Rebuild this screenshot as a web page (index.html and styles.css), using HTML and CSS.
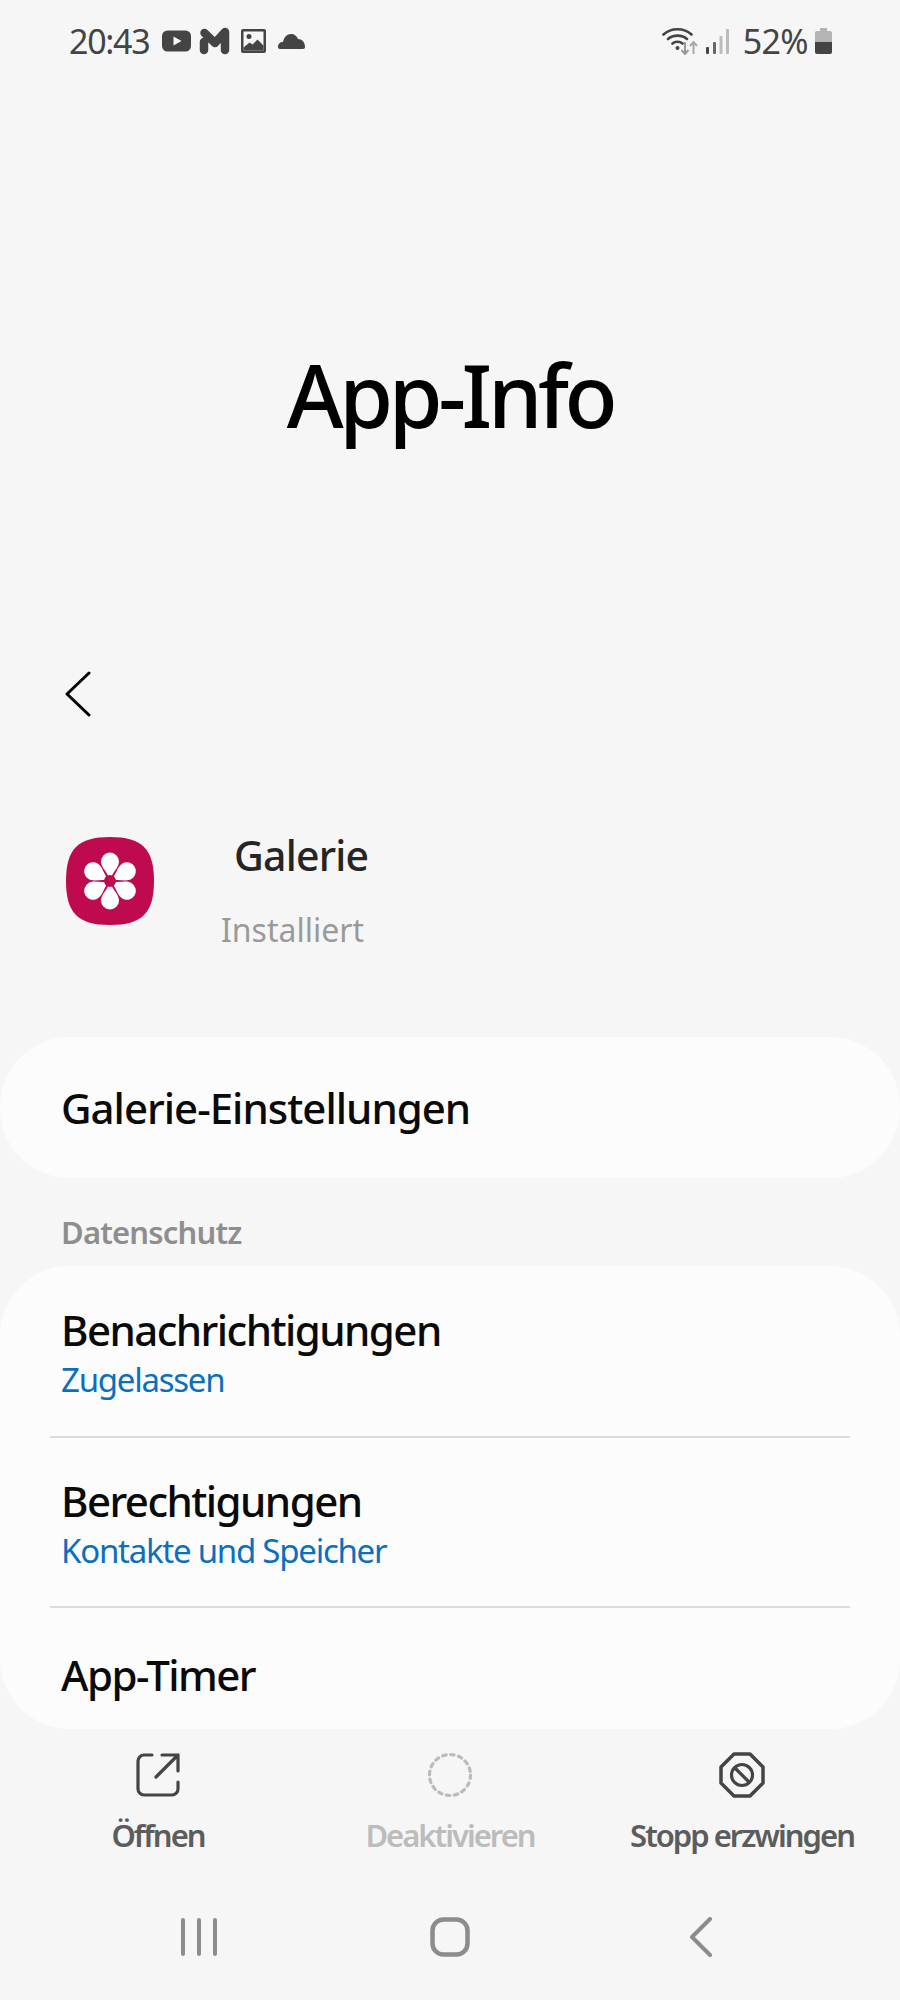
FILE: index.html
```html
<!DOCTYPE html>
<html>

<head>
  <title>App-Info</title>
  <link rel="stylesheet" href="styles.css">
</head>

<body>

  <div class="status-bar">
    <div class="status-side">
      <span class="status-time">20:43</span>
      <svg class="ic-tube" width="29" height="22" viewBox="0 0 29 22"><rect x="0" y="0.500" width="29" height="21" rx="5.500" fill="#444"/><path d="M11.500 6.500v9l8-4.500z" fill="#f6f6f6"/></svg>
      <svg class="ic-mail" width="31" height="28" viewBox="0 0 31 28"><path d="M5 15v8M5.500 6 16 16 26 5v18" fill="none" stroke="#444" stroke-width="8.500" stroke-linecap="round" stroke-linejoin="round"/></svg>
      <svg class="ic-pic" width="25" height="24" viewBox="0 0 25 24"><rect width="25" height="24" rx="2" fill="#444"/><rect x="2.500" y="2.500" width="20" height="19" fill="#f6f6f6"/><circle cx="8" cy="7.500" r="2.500" fill="#444"/><path d="M2.500 21.500v-3l6-5 3 2 5-5 6 6v5z" fill="#444"/></svg>
      <svg class="ic-cloud" width="27" height="17" viewBox="0 0 27 17"><path d="M0 14c0-3 2-5 5-5 1-5 4-8 8-8 3.500 0 6 2 7 5 4 0 7 3 7 8 0 1-.5 2-2 2H2c-1.300 0-2-.8-2-2z" fill="#444"/></svg>
    </div>
    <div class="status-side">
      <svg class="ic-wifi" width="36" height="28" viewBox="0 0 36 28"><path d="M1.500 7.500C9 .5 22 .5 29.500 7.500M6 12c5-4.500 14-4.500 19 0M10.500 16.500c2.500-2.300 7.500-2.300 10 0" fill="none" stroke="#444" stroke-width="2.600" stroke-linecap="round"/><circle cx="15.500" cy="21" r="2" fill="#444"/><path d="M23 15v12M19.500 23l3.500 4 3.500-4" fill="none" stroke="#999" stroke-width="2"/><path d="M31.500 27V15M28 19l3.500-4 3.500 4" fill="none" stroke="#aaa" stroke-width="2"/></svg>
      <svg class="ic-signal" width="23" height="25" viewBox="0 0 23 25"><rect x="0" y="18" width="3" height="7" rx="1" fill="#444"/><rect x="7" y="13" width="3" height="12" rx="1" fill="#666"/><rect x="13.500" y="7" width="3" height="18" rx="1" fill="#bbb"/><rect x="20" y="0" width="3" height="25" rx="1" fill="#bbb"/></svg>
      <span class="status-battery">52%</span>
      <svg class="ic-batt" width="17" height="26" viewBox="0 0 17 26"><path d="M5 0h7v3h3a2 2 0 0 1 2 2v9H0V5a2 2 0 0 1 2-2h3z" fill="#b4b4b4"/><path d="M0 14h17v10a2 2 0 0 1-2 2H2a2 2 0 0 1-2-2z" fill="#444"/></svg>
    </div>
  </div>

  <h1 class="page-title">App-Info</h1>

  <div class="back-row">
    <svg width="28" height="46" viewBox="0 0 28 46"><path d="M25 2 3 23l22 21" fill="none" stroke="#000" stroke-width="3" stroke-linecap="round" stroke-linejoin="round"/></svg>
  </div>

  <div class="app-head">
    <svg class="app-icon" width="88" height="88" viewBox="0 0 88 88">
      <defs>
        <path id="petal" d="M44 44C42 35 35 31 35 24.500a9 9 0 0 1 18 0C53 31 46 35 44 44z" fill="#fff"/>
      </defs>
      <path d="M44 0C76 0 88 12 88 44S76 88 44 88 0 76 0 44 12 0 44 0z" fill="#bf0a50"/>
      <use href="#petal"/>
      <use href="#petal" transform="rotate(60 44 44)"/>
      <use href="#petal" transform="rotate(120 44 44)"/>
      <use href="#petal" transform="rotate(180 44 44)"/>
      <use href="#petal" transform="rotate(240 44 44)"/>
      <use href="#petal" transform="rotate(300 44 44)"/>
      <circle cx="44" cy="44" r="6" fill="#bf0a50"/>
    </svg>
    <div class="app-names">
      <div class="app-name">Galerie</div>
      <div class="app-state">Installiert</div>
    </div>
  </div>

  <div class="card card-settings">
    <div class="row-title row-title-wide">Galerie-Einstellungen</div>
  </div>

  <div class="section-label">Datenschutz</div>

  <div class="card card-list">
    <div class="list-row">
      <div class="row-title">Benachrichtigungen</div>
      <div class="row-sub">Zugelassen</div>
    </div>
    <div class="list-row list-row-mid">
      <div class="row-title">Berechtigungen</div>
      <div class="row-sub">Kontakte und Speicher</div>
    </div>
    <div class="list-row list-row-last">
      <div class="row-title">App-Timer</div>
    </div>
  </div>

  <div class="actions">
    <div class="action">
      <svg width="46" height="46" viewBox="0 0 46 46"><path d="M17 3H9a6 6 0 0 0-6 6v28a6 6 0 0 0 6 6h28a6 6 0 0 0 6-6V30M27 3h16v16M43 3 21 25" fill="none" stroke="#444" stroke-width="3.200" stroke-linecap="round" stroke-linejoin="round"/></svg>
      <span>Öffnen</span>
    </div>
    <div class="action action-off">
      <svg width="46" height="46" viewBox="0 0 46 46"><circle cx="23" cy="23" r="20.500" fill="none" stroke="#bbb" stroke-width="3.200" stroke-linecap="round" stroke-dasharray="3.500 4.550"/></svg>
      <span>Deaktivieren</span>
    </div>
    <div class="action">
      <svg width="46" height="46" viewBox="0 0 46 46"><path d="M15 2h16l13 13v16L31 44H15L2 31V15z" fill="none" stroke="#444" stroke-width="3.500" stroke-linejoin="round"/><circle cx="23" cy="23" r="10.500" fill="none" stroke="#444" stroke-width="3.200"/><path d="m16 16 14 14" stroke="#444" stroke-width="3.200"/></svg>
      <span>Stopp erzwingen</span>
    </div>
  </div>

  <div class="nav-bar">
    <svg width="38" height="38" viewBox="0 0 38 38"><path d="M3 2v34M19 2v34M35 2v34" fill="none" stroke="#8c8c8c" stroke-width="4" stroke-linecap="round"/></svg>
    <svg width="40" height="40" viewBox="0 0 40 40"><rect x="2.500" y="2.500" width="35" height="35" rx="11" fill="none" stroke="#8c8c8c" stroke-width="4.500"/></svg>
    <svg width="24" height="40" viewBox="0 0 24 40"><path d="M21 2 3 20l18 18" fill="none" stroke="#8c8c8c" stroke-width="4" stroke-linecap="round" stroke-linejoin="round"/></svg>
  </div>

</body>

</html>
```

FILE: styles.css
```css
body {
  margin: 0;
  width: 900px;
  height: 2000px;
  overflow: hidden;
  background-color: #f6f6f6;
  color: #000;
  font-family: "Noto Sans", sans-serif;
}

.status-bar {
  display: flex;
  justify-content: space-between;
  align-items: center;
  height: 42px;
  padding: 20px 68px 0 69px;
  color: #444;
}

.status-side {
  display: flex;
  align-items: center;
}

.status-time,
.status-battery {
  font-size: 34px;
  letter-spacing: -1.3px;
}

.status-battery {
  letter-spacing: -0.6px;
}

.ic-tube { margin-left: 13px; }
.ic-mail { margin-left: 8px; }
.ic-pic { margin-left: 11px; }
.ic-cloud { margin-left: 12px; }
.ic-signal { margin-left: 8px; }
.status-battery { margin-left: 14px; }
.ic-batt { margin-left: 7px; }

.page-title {
  margin: 0;
  padding-top: 282px;
  height: 100px;
  line-height: 100px;
  font-size: 87px;
  font-weight: 500;
  letter-spacing: -4.5px;
  text-align: center;
}

.back-row {
  height: 46px;
  padding: 227px 0 0 64px;
}

.app-head {
  display: flex;
  padding: 120px 0 0 66px;
}

.app-names {
  margin-left: 67px;
}

.app-name {
  margin-left: 13px;
  height: 36px;
  line-height: 36px;
  font-size: 41px;
  font-weight: 500;
  color: #252525;
  letter-spacing: -0.8px;
}

.app-state {
  margin-top: 36px;
  line-height: 42px;
  font-size: 32px;
  color: #9a9a9a;
}

.card {
  background-color: #fcfcfc;
  border-radius: 70px;
}

.card-settings {
  display: flex;
  align-items: center;
  height: 141px;
  margin-top: 86px;
  padding-left: 61px;
}

.section-label {
  height: 88px;
  padding-left: 61px;
  line-height: 108px;
  font-size: 31px;
  font-weight: 600;
  letter-spacing: -0.8px;
  color: #8e8e8e;
}

.card-list {
  height: 463px;
  padding: 0 50px;
  overflow: hidden;
}

.list-row {
  height: 172px;
  padding: 37px 11px 0;
  box-sizing: border-box;
  border-bottom: 2px solid #dcdcdc;
}

.list-row-mid {
  height: 170px;
  padding-top: 36px;
}

.list-row-last {
  padding-top: 40px;
  border-bottom: none;
}

.row-title {
  line-height: 54px;
  font-size: 42px;
  font-weight: 500;
  letter-spacing: -1.55px;
  color: #0a0a0a;
}

.row-title-wide {
  letter-spacing: -1px;
}

.row-sub {
  line-height: 46px;
  font-size: 33px;
  letter-spacing: -1.25px;
  color: #0b6fbf;
}

.actions {
  display: grid;
  grid-template-columns: 316px 268px 316px;
  padding-top: 23px;
}

.action {
  display: flex;
  flex-direction: column;
  align-items: center;
  gap: 16px;
  font-size: 31px;
  font-weight: 600;
  letter-spacing: -2px;
  color: #5c5c5c;
  white-space: nowrap;
}

.action-off {
  color: #bcbcbc;
}

.nav-bar {
  display: grid;
  grid-template-columns: 398px 104px 398px;
  justify-items: center;
  align-items: center;
  padding-top: 61px;
}
```
